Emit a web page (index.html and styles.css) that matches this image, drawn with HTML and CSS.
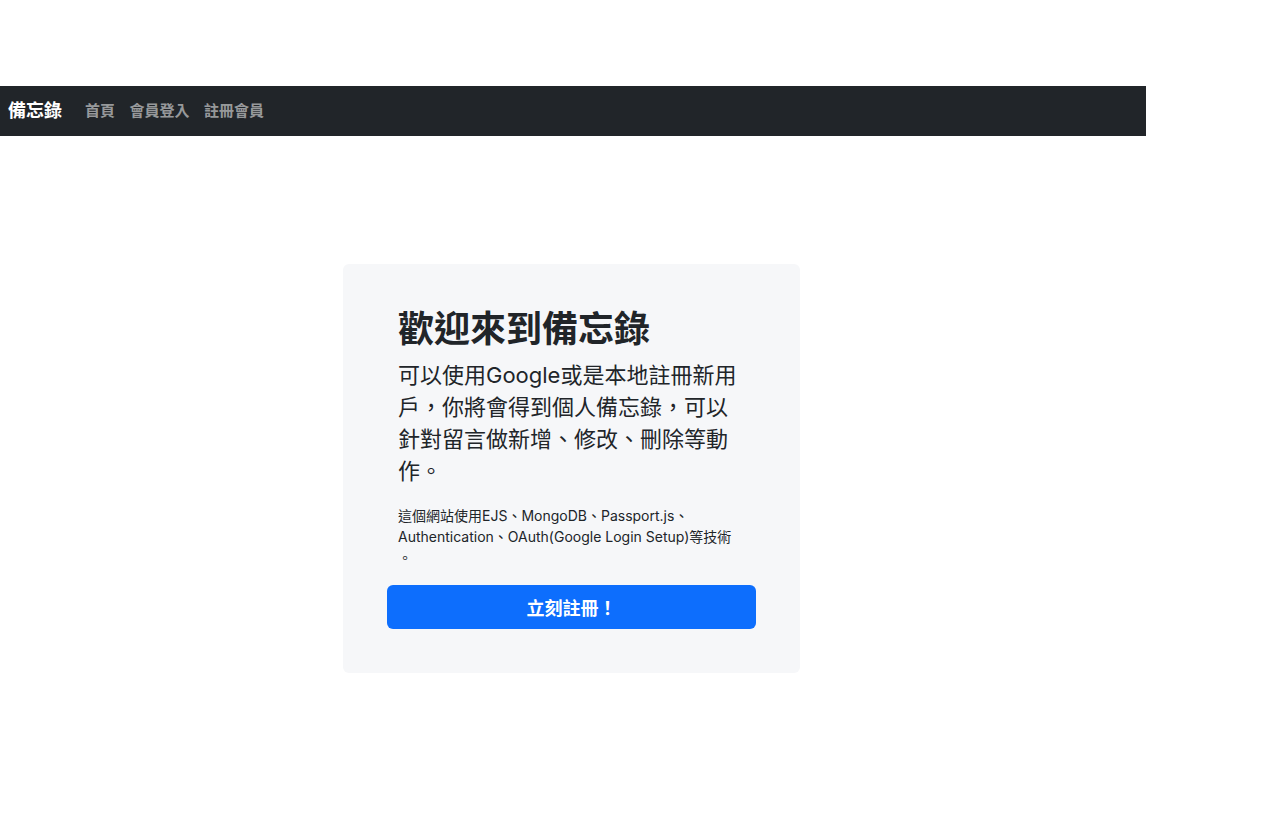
FILE: index.html
```html
<!DOCTYPE html>
<html lang="zh-Hant">
<head>
<meta charset="utf-8">
<title>備忘錄</title>
<link rel="stylesheet" href="styles.css">
</head>
<body>
<div class="page">
  <nav class="navbar">
    <a class="brand" href="#">備忘錄</a>
    <ul class="nav-links">
      <li><a href="#">首頁</a></li>
      <li><a href="#">會員登入</a></li>
      <li><a href="#">註冊會員</a></li>
    </ul>
  </nav>
  <main class="main">
    <section class="card">
      <div class="card-text">
        <h1 class="title">歡迎來到備忘錄</h1>
        <p class="lead">可以使用Google或是本地註冊新用戶，你將會得到個人備忘錄，可以針對留言做新增、修改、刪除等動作。</p>
        <p class="small">這個網站使用EJS、MongoDB、Passport.js、Authentication、OAuth(Google Login Setup)等技術<span class="period">。</span></p>
      </div>
      <a class="btn" href="#">立刻註冊！</a>
    </section>
  </main>
</div>
</body>
</html>
```
FILE: styles.css
```css
* { box-sizing: border-box; }
html, body { margin: 0; padding: 0; background: #fff; }
body {
  font-family: Inter, "Noto Sans CJK TC", sans-serif;
  color: #212529;
}
.page { width: 1146px; padding-top: 86px; }
.navbar {
  height: 50px;
  background: #212529;
  display: flex;
  align-items: center;
  padding: 0 0 4px 8px;
}
.brand {
  color: #fff;
  text-decoration: none;
  font-size: 18px;
  font-weight: 700;
  margin-right: 23px;
}
.nav-links {
  list-style: none;
  margin: 0;
  padding: 0;
  display: flex;
  gap: 14.5px;
}
.nav-links a {
  color: rgba(255,255,255,.55);
  text-decoration: none;
  font-size: 15px;
  font-weight: 700;
}
.main {
  display: flex;
  justify-content: center;
  padding: 128px 3px 0 0;
}
.card {
  width: 457px;
  background: #f6f7f9;
  border-radius: 6px;
  padding: 44px;
  display: flex;
  flex-direction: column;
}
.card-text { padding: 0 11px; }
.title {
  margin: 0 0 8px;
  font-size: 36px;
  line-height: 43px;
  font-weight: 700;
  color: #212529;
}
.lead {
  margin: 0 0 18px;
  font-size: 22px;
  line-height: 32px;
  font-weight: 400;
}
.small {
  margin: 0 0 17px;
  font-size: 14px;
  line-height: 21px;
}
.period { display: block; }
.btn {
  display: flex;
  align-items: center;
  justify-content: center;
  height: 44px;
  background: #0d6efd;
  color: #fff;
  border-radius: 6px;
  text-decoration: none;
  font-size: 18px;
  font-weight: 700;
}
```
